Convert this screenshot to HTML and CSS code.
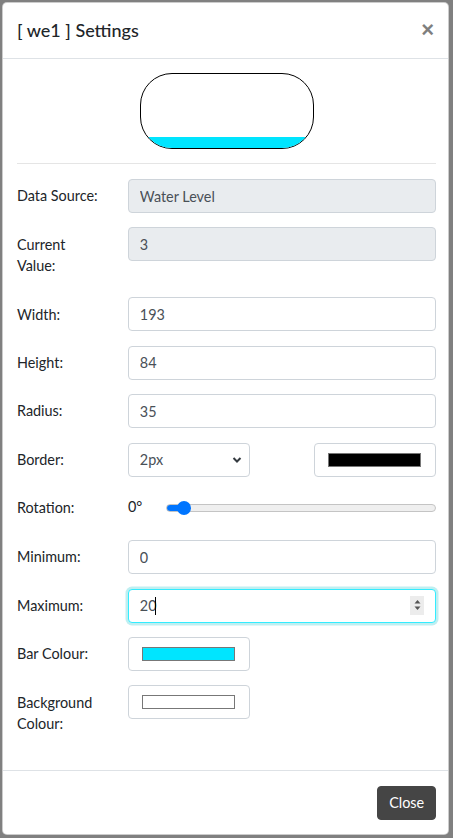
FILE: index.html
```html
<!DOCTYPE html>
<html>
<head>
  <title>Widget Settings</title>
  <link rel="stylesheet" href="styles.css">
</head>
<body>
  <div class="modal-dialog">
    <div class="modal-header">
      <h5 class="modal-title">[ we1 ] Settings</h5>
      <button type="button" class="close-x">&times;</button>
    </div>

    <div class="modal-body">
      <div class="preview">
        <div class="tank">
          <div class="tank-fill" style="height: 15%"></div>
        </div>
      </div>
      <hr>

      <div class="form-row">
        <label class="col-label" for="dataSource">Data Source:</label>
        <div class="col-field">
          <input type="text" id="dataSource" class="form-control" value="Water Level" disabled>
        </div>
      </div>

      <div class="form-row">
        <label class="col-label" for="currentValue">Current Value:</label>
        <div class="col-field">
          <input type="text" id="currentValue" class="form-control" value="3" disabled>
        </div>
      </div>

      <div class="form-row">
        <label class="col-label" for="width">Width:</label>
        <div class="col-field">
          <input type="text" id="width" class="form-control" value="193">
        </div>
      </div>

      <div class="form-row">
        <label class="col-label" for="height">Height:</label>
        <div class="col-field">
          <input type="text" id="height" class="form-control" value="84">
        </div>
      </div>

      <div class="form-row">
        <label class="col-label" for="radius">Radius:</label>
        <div class="col-field">
          <input type="text" id="radius" class="form-control" value="35">
        </div>
      </div>

      <div class="form-row">
        <label class="col-label" for="borderWidth">Border:</label>
        <div class="col-field split">
          <div class="select-wrap">
            <select id="borderWidth" class="form-control select">
              <option>1px</option>
              <option selected>2px</option>
              <option>3px</option>
            </select>
            <svg class="chevron" width="10" height="8" viewBox="0 0 10 8">
              <polyline points="1.5,2 5,5.5 8.5,2" fill="none" stroke="#343a40" stroke-width="2"/>
            </svg>
          </div>
          <input type="color" class="form-control colour" value="#000000">
        </div>
      </div>

      <div class="form-row">
        <label class="col-label" for="rotation">Rotation:</label>
        <div class="col-field range-field">
          <span class="range-value">0&deg;</span>
          <input type="range" id="rotation" class="range" min="-15" max="360" value="0">
        </div>
      </div>

      <div class="form-row">
        <label class="col-label" for="minimum">Minimum:</label>
        <div class="col-field">
          <input type="text" id="minimum" class="form-control" value="0">
        </div>
      </div>

      <div class="form-row">
        <label class="col-label" for="maximum">Maximum:</label>
        <div class="col-field">
          <div class="number-wrap">
            <input type="text" id="maximum" class="form-control focused" value="20">
            <span class="caret"></span>
            <span class="spinner">
              <svg width="7" height="14" viewBox="0 0 7 14">
                <polygon points="3.5,2 6.5,5.5 0.5,5.5" fill="#555"/>
                <polygon points="3.5,12 6.5,8.5 0.5,8.5" fill="#555"/>
              </svg>
            </span>
          </div>
        </div>
      </div>

      <div class="form-row">
        <label class="col-label" for="barColour">Bar Colour:</label>
        <div class="col-field">
          <input type="color" id="barColour" class="form-control colour" value="#00e5ff">
        </div>
      </div>

      <div class="form-row">
        <label class="col-label" for="bgColour">Background Colour:</label>
        <div class="col-field">
          <input type="color" id="bgColour" class="form-control colour" value="#ffffff">
        </div>
      </div>
    </div>

    <div class="modal-footer">
      <button type="button" class="btn-close">Close</button>
    </div>
  </div>
</body>
</html>
```

FILE: styles.css
```css
html,
body {
  margin: 0;
  height: 838px;
  overflow: hidden;
}

body {
  font-family: Lato, "Liberation Sans", sans-serif;
  font-size: 14.4px;
  line-height: 21.6px;
  color: #212529;
  background-color: #808080;
  padding: 2px 0 0 2px;
  box-sizing: border-box;
}

.modal-dialog {
  width: 447px;
  height: 833px;
  background-color: #ffffff;
  border: 1px solid rgba(0, 0, 0, 0.2);
  border-radius: 5px;
  box-sizing: border-box;
  display: flex;
  flex-direction: column;
}

/* header */
.modal-header {
  display: flex;
  justify-content: space-between;
  align-items: center;
  padding: 14px;
  border-bottom: 1px solid #dee2e6;
}

.modal-title {
  margin: 0;
  font-size: 18px;
  line-height: 27px;
  font-weight: 500;
}

.close-x {
  border: none;
  background: none;
  padding: 0;
  margin: -2px 0 0 0;
  font-family: "Liberation Sans", sans-serif;
  font-size: 22px;
  font-weight: 700;
  line-height: 1;
  color: #000000;
  opacity: 0.5;
}

/* body */
.modal-body {
  flex: 1;
  padding: 14px 12px 14px 14px;
}

.preview {
  display: flex;
  justify-content: center;
}

.tank {
  width: 174px;
  height: 76px;
  border: 1.5px solid #000000;
  border-radius: 32px;
  box-sizing: border-box;
  overflow: hidden;
  display: flex;
  flex-direction: column;
  justify-content: flex-end;
}

.tank-fill {
  background-color: #00e5ff;
}

hr {
  margin: 14px 0 15px;
  border: 0;
  border-top: 1px solid rgba(0, 0, 0, 0.1);
}

.form-row {
  display: flex;
  margin-bottom: 14.4px;
}

.col-label {
  width: 111px;
  flex-shrink: 0;
  padding: 6.2px 30px 6.2px 0;
  box-sizing: border-box;
}

.col-field {
  flex: 1;
}

.form-control {
  display: block;
  width: 100%;
  height: 34px;
  padding: 5px 10.8px;
  font-family: inherit;
  font-size: 14.4px;
  line-height: 21.6px;
  color: #495057;
  background-color: #ffffff;
  border: 1px solid #ced4da;
  border-radius: 4px;
  box-sizing: border-box;
  outline: none;
}

.form-control:disabled {
  background-color: #e9ecef;
  opacity: 1;
}

/* border width select + colour */
.split {
  display: flex;
  justify-content: space-between;
}

.select-wrap {
  position: relative;
  width: 122px;
}

.select {
  appearance: none;
  -webkit-appearance: none;
}

.chevron {
  position: absolute;
  right: 8px;
  top: 13px;
}

.colour {
  width: 122px;
  padding: 9px 14px 9px 13px;
  cursor: pointer;
}

.colour::-webkit-color-swatch-wrapper {
  padding: 0;
}

.colour::-webkit-color-swatch {
  border: 1px solid #777777;
  border-radius: 0;
}

/* rotation slider */
.range-field {
  display: flex;
  align-items: center;
  height: 35px;
}

.range-value {
  width: 38px;
  flex-shrink: 0;
  color: #212529;
  margin-top: -4px;
}

.range {
  -webkit-appearance: none;
  appearance: none;
  flex: 1;
  height: 8px;
  margin: 0;
  border: 1px solid #c4c4c4;
  border-radius: 4px;
  background: linear-gradient(to right, #0075ff 0 16px, #efefef 16px);
  box-sizing: border-box;
}

.range::-webkit-slider-thumb {
  -webkit-appearance: none;
  width: 14px;
  height: 14px;
  border-radius: 50%;
  background-color: #0075ff;
  border: none;
}

/* focused number field */
.number-wrap {
  position: relative;
}

.focused {
  border-color: #33ecff;
  box-shadow: 0 0 0 2.5px rgba(0, 190, 200, 0.25);
}

.caret {
  position: absolute;
  left: 27px;
  top: 8px;
  width: 1px;
  height: 18px;
  background-color: #000000;
}

.spinner {
  position: absolute;
  right: 12px;
  top: 7px;
  width: 14px;
  height: 19px;
  background-color: #ececec;
  display: flex;
  align-items: center;
  justify-content: center;
}

/* footer */
.modal-footer {
  display: flex;
  justify-content: flex-end;
  padding: 14.4px 12px 14.4px 14px;
  border-top: 1px solid #dee2e6;
}

.btn-close {
  height: 34px;
  padding: 5px 10.8px;
  font-family: inherit;
  font-size: 14.4px;
  line-height: 21.6px;
  color: #ffffff;
  background-color: #454545;
  border: 1px solid #454545;
  border-radius: 4px;
}
```
